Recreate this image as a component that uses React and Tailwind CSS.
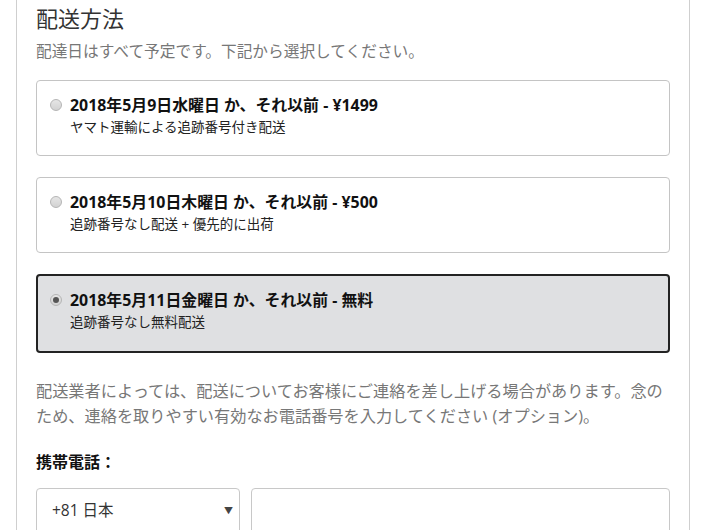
import { useState } from "react";

const OPTIONS = [
  { id: "a", title: "2018年5月9日水曜日 か、それ以前 - ¥1499", sub: "ヤマト運輸による追跡番号付き配送" },
  { id: "b", title: "2018年5月10日木曜日 か、それ以前 - ¥500", sub: "追跡番号なし配送 + 優先的に出荷" },
  { id: "c", title: "2018年5月11日金曜日 か、それ以前 - 無料", sub: "追跡番号なし無料配送" },
];

function Radio({ checked }) {
  return (
    <span className="w-[12px] h-[12px] rounded-full border border-[#b5b5b5] bg-gradient-to-b from-[#e6e6e6] to-[#d2d2d2] flex items-center justify-center shrink-0">
      {checked && <span className="w-[6px] h-[6px] rounded-full bg-[#555]" />}
    </span>
  );
}

export default function App() {
  const [selected, setSelected] = useState("c");

  return (
    <div
      className="w-[706px] h-[530px] overflow-hidden bg-white"
      style={{ fontFamily: '"Open Sans", "Noto Sans CJK JP", sans-serif' }}
    >
      <div className="ml-[16px] w-[674px] min-h-[530px] border-x border-[#cfcfcf] px-[19px]">
        <h2 className="pt-[3px] text-[22px] leading-[30px] text-[#333] font-normal">配送方法</h2>
        <p className="mt-[7px] text-[15.7px] leading-[22px] text-[#777]">
          配達日はすべて予定です。下記から選択してください。
        </p>

        <div className="mt-[18px] flex flex-col gap-[21px]">
          {OPTIONS.map((o) => {
            const on = selected === o.id;
            return (
              <div
                key={o.id}
                onClick={() => setSelected(o.id)}
                className={
                  on
                    ? "h-[79px] rounded-[4px] border-2 border-[#232323] bg-[#dfe0e2] pl-[12px] pt-[14px] cursor-pointer"
                    : "h-[76px] rounded-[4px] border border-[#c4c4c4] bg-white pl-[13px] pt-[14px] cursor-pointer"
                }
              >
                <div className="flex items-center gap-[8px]">
                  <Radio checked={on} />
                  <span className="text-[15.9px] leading-[20px] font-bold text-[#111]">{o.title}</span>
                </div>
                <div className="pl-[20px] mt-[3px] text-[13.5px] leading-[18px] text-[#222]">{o.sub}</div>
              </div>
            );
          })}
        </div>

        <p className="mt-[26px] text-[16.2px] leading-[25px] text-[#777]">
          配送業者によっては、配送についてお客様にご連絡を差し上げる場合があります。念のため、連絡を取りやすい有効なお電話番号を入力してください (オプション)。
        </p>

        <div className="mt-[22px] text-[16px] leading-[22px] font-bold text-[#111]">携帯電話：</div>

        <div className="mt-[15px] flex gap-[11px]">
          <div className="relative w-[204px] h-[46px] rounded-[4px] border border-[#c8c8c8] bg-white flex items-center pl-[15px] text-[15.5px] text-[#333]">
            +81 日本
            <span className="absolute right-[6px] top-[15px] text-[9px] text-[#444]">▼</span>
          </div>
          <input className="flex-1 h-[46px] rounded-[4px] border border-[#c8c8c8] bg-white outline-none px-3" />
        </div>
      </div>
    </div>
  );
}
